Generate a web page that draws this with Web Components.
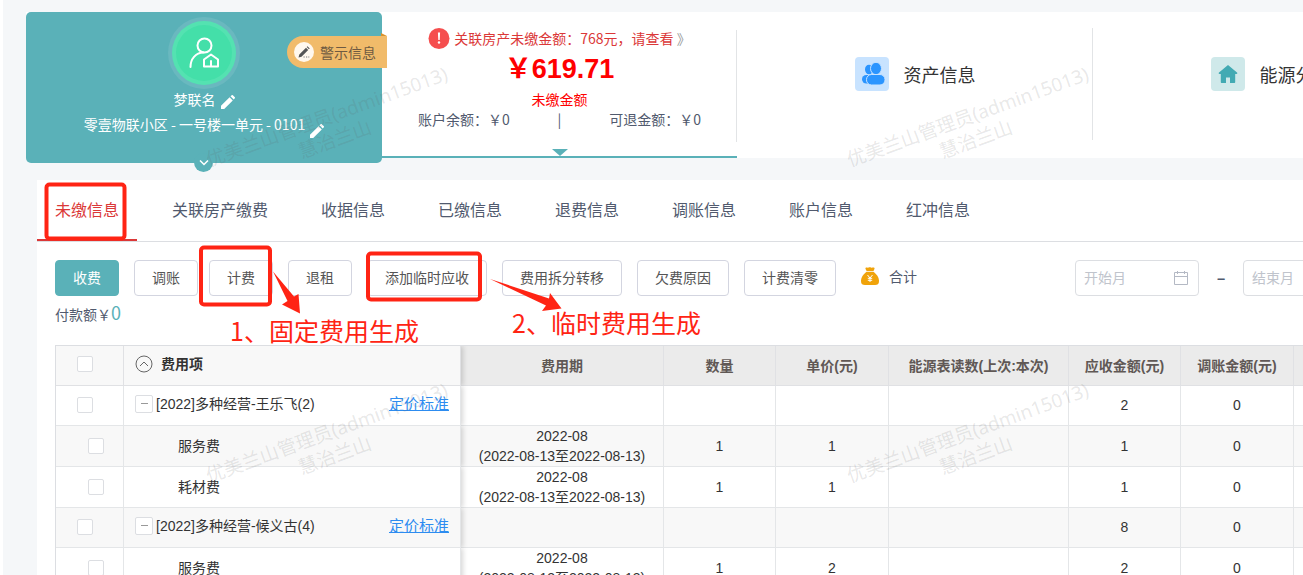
<!DOCTYPE html>
<html lang="zh-CN">
<head>
<meta charset="utf-8">
<title>收费管理</title>
<style>
  :root {
    --teal: #5ab1b8;
    --red: #db3838;
    --mark: #ff2414;
    --text: #515a6e;
    --line: #e4e6e8;
    --page: #f5f7f9;
  }

  body {
    margin: 0;
    min-height: 100vh;
    border-left: 3px solid #fff;
    box-sizing: border-box;
    overflow: hidden;
    position: relative;
    background: var(--page);
    color: var(--text);
    font: 14px/20px "Noto Sans CJK SC", sans-serif;
  }

  header {
    display: grid;
    grid-template-columns: 356px 355px repeat(2, minmax(356px, 1fr));
    margin: 12px 0 22px 23px;
    height: 146px;
    background: #fff;
  }

  main {
    margin-left: 34px;
    background: #fff;
  }

  .toolbar {
    display: flex;
    align-items: center;
    gap: 15px;
    padding: 18px 0 0 18px;
  }

  .pair {
    display: flex;
    gap: 11px;
  }
</style>
</head>
<body>
  <header>
    <owner-card name="梦联名" address="零壹物联小区 - 一号楼一单元 - 0101">警示信息</owner-card>
    <balance-panel></balance-panel>
    <entry-panel icon="people">资产信息</entry-panel>
    <entry-panel icon="house">能源分析</entry-panel>
  </header>
  <main>
    <tab-bar></tab-bar>
    <div class="toolbar">
      <tool-button primary>收费</tool-button>
      <div class="pair">
        <tool-button>调账</tool-button>
        <tool-button>计费</tool-button>
      </div>
      <tool-button>退租</tool-button>
      <tool-button>添加临时应收</tool-button>
      <tool-button>费用拆分转移</tool-button>
      <tool-button>欠费原因</tool-button>
      <tool-button>计费清零</tool-button>
      <total-link>合计</total-link>
      <month-range></month-range>
    </div>
    <pay-amount value="0">付款额￥</pay-amount>
    <fee-table></fee-table>
  </main>
  <water-mark></water-mark>
  <guide-marks></guide-marks>

<script>
const define = (name, render) => {
  customElements.define(name, class extends HTMLElement {
    constructor() {
      super();
      this.attachShadow({ mode: "open" });
    }

    connectedCallback() {
      this.shadowRoot.innerHTML = render(this);
    }
  });
};

const pencil = `
  <svg width="14" height="14" viewBox="0 0 14 14" fill="currentColor" aria-hidden="true">
    <path d="M0 14v-3.2L8.6 2.2l3.2 3.2L3.2 14zM9.5 1.3 10.4.4a1.2 1.2 0 0 1 1.7 0l1.5 1.5a1.2 1.2 0 0 1 0 1.7l-.9.9z"/>
  </svg>`;

define("owner-card", (el) => `
  <style>
    :host {
      display: flex;
      flex-direction: column;
      align-items: center;
      position: relative;
      margin-bottom: -5px;
      padding-top: 5px;
      box-sizing: border-box;
      border-radius: 5px;
      background: var(--teal);
      color: #fff;
    }
    .name, .address {
      display: flex;
      align-items: flex-start;
      gap: 5px;
      height: 25px;
    }
    button {
      border: 0;
      padding: 0;
      background: none;
      color: inherit;
      font: inherit;
      display: flex;
    }
    .name button { padding-top: 6px; }
    .address button { padding-top: 10px; }
    .warn {
      position: absolute;
      top: 24px;
      right: -5px;
      height: 32px;
      align-items: center;
      gap: 6px;
      padding: 0 11px 0 7px;
      border-radius: 16px 0 0 16px;
      background: #f1bb6a;
      color: #6e5a42;
    }
    .warn::after {
      content: "";
      position: absolute;
      right: 0;
      top: -3px;
      border-left: 6px solid #d9922c;
      border-top: 3px solid transparent;
    }
    .more {
      position: absolute;
      left: calc(50% - 10px);
      bottom: -9px;
      width: 19px;
      height: 19px;
      align-items: center;
      justify-content: center;
      border-radius: 50%;
      background: var(--teal);
    }
  </style>
  <svg width="72" height="72" viewBox="0 0 72 72" fill="none" stroke="#fff" stroke-width="2" stroke-linejoin="round" stroke-linecap="round" aria-hidden="true">
    <circle cx="36" cy="36" r="36" fill="#6ab8bf" stroke="none"/>
    <circle cx="36" cy="36" r="32" fill="#54e2b1" stroke="none"/>
    <circle cx="36" cy="36" r="28" fill="#44dfa9" stroke="none"/>
    <circle cx="36.500" cy="28.500" r="7"/>
    <path d="M22.500 50c0-8 5-14.300 13-14.500"/>
    <path d="M36 42.500 43 37.500l7 5V49.500H36z"/>
    <path d="M43 49v-5"/>
  </svg>
  <div class="name">${el.getAttribute("name")}<button aria-label="修改姓名">${pencil}</button></div>
  <div class="address">${el.getAttribute("address")}<button aria-label="修改地址">${pencil}</button></div>
  <button class="warn">
    <svg width="20" height="20" viewBox="0 0 20 20" aria-hidden="true">
      <circle cx="10" cy="10" r="10" fill="#fff8ee"/>
      <path d="M4.500 15.500l.8-3L12 5.800l2.200 2.200-6.700 6.700zM12.700 5.100l.8-.8 2.200 2.200-.8.800z" fill="#555"/>
      <path d="M9.500 15h1.200M12 15h1.200M14.300 15h1" stroke="#777"/>
    </svg>
    <slot></slot>
  </button>
  <button class="more" aria-label="展开">
    <svg width="10" height="6" viewBox="0 0 10 6" fill="none" stroke="#fff" stroke-width="1.500"><path d="M1 .5l4 4 4-4"/></svg>
  </button>
`);

define("balance-panel", () => `
  <style>
    :host {
      display: flex;
      flex-direction: column;
      position: relative;
      padding-top: 15px;
      border-bottom: 2px solid var(--teal);
      text-align: center;
    }
    :host::before {
      content: "";
      position: absolute;
      right: 0;
      top: 18px;
      height: 112px;
      border-right: 1px solid #e2e4e6;
    }
    :host::after {
      content: "";
      position: absolute;
      left: calc(50% - 8px);
      bottom: 0;
      border: 8px solid transparent;
      border-top: 7px solid var(--teal);
      border-bottom: 0;
    }
    a {
      display: flex;
      justify-content: center;
      align-items: center;
      gap: 4px;
      height: 22px;
      color: var(--red);
      text-decoration: none;
    }
    svg { margin-top: 2px; }
    i { color: #999; font-style: normal; }
    strong { font: bold 27px/40px "Liberation Sans", "Noto Sans CJK SC", sans-serif; color: #f00; }
    .due { color: #f00; }
    .split {
      display: flex;
      justify-content: space-between;
      padding: 0 36px;
    }
  </style>
  <a href="#related">
    <svg width="22" height="22" viewBox="0 0 22 22" aria-hidden="true">
      <circle cx="11" cy="10.500" r="10.500" fill="#f54e4e"/>
      <path d="M9.900 4.500h2.200l-.4 7.500h-1.400z" fill="#fff"/>
      <circle cx="11" cy="14.500" r="1.200" fill="#fff"/>
    </svg>
    <span>关联房产未缴金额：768元，请查看 <i>》</i></span>
  </a>
  <strong>￥619.71</strong>
  <span class="due">未缴金额</span>
  <div class="split"><span>账户余额：￥0</span><span>|</span><span>可退金额：￥0</span></div>
`);

const entryIcons = {
  people: `
    <rect width="34" height="34" rx="4" fill="#c8e3ff"/>
    <g fill="#2b95ff">
      <ellipse cx="14" cy="12.500" rx="4" ry="4.800"/>
      <rect x="7" y="18" width="14" height="8.500" rx="4.200"/>
      <g stroke="#c8e3ff">
        <ellipse cx="21" cy="11.500" rx="5.500" ry="6.200"/>
        <rect x="11.500" y="17.500" width="18.500" height="10.500" rx="5"/>
      </g>
    </g>`,
  house: `
    <rect width="34" height="34" rx="4" fill="#cfe9ea"/>
    <path d="M17 8l9 7.500c.7.700.3 1.500-.5 1.500h-1.300v8c0 .700-.4 1-1 1H19v-5.500h-4V26h-4.200c-.6 0-1-.3-1-1v-8H8.500c-.8 0-1.200-.8-.5-1.500z" fill="#42aab3"/>`,
};

define("entry-panel", (el) => `
  <style>
    :host {
      display: flex;
      align-items: center;
      justify-content: center;
      position: relative;
      padding-bottom: 22px;
      box-sizing: border-box;
    }
    :host::after {
      content: "";
      position: absolute;
      right: 0;
      top: 16px;
      height: 112px;
      border-right: 1px solid #e2e4e6;
    }
    a {
      display: flex;
      align-items: center;
      gap: 15px;
      color: #333;
      font-size: 18px;
      text-decoration: none;
      white-space: nowrap;
    }
  </style>
  <a href="#${el.getAttribute("icon")}">
    <svg width="34" height="34" viewBox="0 0 34 34" aria-hidden="true">${entryIcons[el.getAttribute("icon")]}</svg>
    <slot></slot>
  </a>
`);

const tabs = ["未缴信息", "关联房产缴费", "收据信息", "已缴信息", "退费信息", "调账信息", "账户信息", "红冲信息"];

define("tab-bar", () => `
  <style>
    :host {
      display: flex;
      gap: 17px;
      border-bottom: 1px solid #dcdee2;
    }
    button {
      height: 61px;
      padding: 0 18px 1px;
      border: 0;
      border-bottom: 2px solid transparent;
      background: none;
      color: var(--text);
      font: inherit;
      font-size: 16px;
      white-space: nowrap;
    }
    .on { color: var(--red); border-color: var(--red); }
  </style>
  ${tabs.map((t, i) => `<button class="${i ? "" : "on"}">${t}</button>`).join("")}
`);

define("tool-button", () => `
  <style>
    :host { display: block; }
    button {
      height: 36px;
      padding: 0 17px 3px;
      border: 1px solid #d3d5e0;
      border-radius: 4px;
      background: #fff;
      color: #555;
      font: inherit;
      white-space: nowrap;
      display: block;
    }
    :host([primary]) button {
      border-color: var(--teal);
      background: var(--teal);
      color: #fff;
    }
  </style>
  <button><slot></slot></button>
`);

define("total-link", () => `
  <style>
    :host { display: flex; align-items: center; gap: 10px; margin-left: 10px; padding-bottom: 4px; white-space: nowrap; }
  </style>
  <svg width="18" height="18" viewBox="0 0 18 18" aria-hidden="true">
    <path d="M4.500 1c1-1 2 .2 3-.5.8-.5 1.700-.5 2.500 0 1 .7 2-.5 3.300.3.800.500-.2 1.700-.8 3.200h-7C5.500 3 4 2 4.500 1z" fill="#f0a30a"/>
    <path d="M5.500 4.800h7C15.500 7 18 10.500 18 14c0 3-1.500 4-4 4H4c-2.500 0-4-1-4-4 0-3.500 2.500-7 5.500-9.200z" fill="#f0a30a"/>
    <path d="M6.500 8 9 11l2.500-3M9 11v4M6.800 11.300h4.400M6.800 13.300h4.400" fill="none" stroke="#fff"/>
  </svg>
  <slot></slot>
`);

const monthField = (label) => `
  <label>
    <input type="text" placeholder="${label}" aria-label="${label}">
    <svg width="16" height="16" viewBox="0 0 16 16" fill="none" stroke="#b4b9c4" aria-hidden="true">
      <path d="M1.500 2.500h13v12h-13zM1.500 6.500h13M4.500 1v3M11.500 1v3"/>
    </svg>
  </label>`;

define("month-range", () => `
  <style>
    :host { display: flex; align-items: center; margin-left: 143px; gap: 17px; }
    label {
      display: flex;
      align-items: center;
      width: 124px;
      height: 36px;
      padding: 0 9px 0 8px;
      box-sizing: border-box;
      border: 1px solid #dcdee2;
      border-radius: 4px;
    }
    input {
      flex: 1;
      min-width: 0;
      padding: 0 0 2px;
      border: 0;
      outline: 0;
      font: inherit;
      color: inherit;
    }
    input::placeholder { color: #c0c4cc; opacity: 1; }
    span { width: 10px; padding-bottom: 3px; text-align: center; font-weight: bold; font-size: 16px; }
  </style>
  ${monthField("开始月")}<span>–</span>${monthField("结束月")}
`);

define("pay-amount", (el) => `
  <style>
    :host { display: block; padding: 6px 18px 19px; line-height: 24px; }
    b { color: var(--teal); font-size: 18px; font-weight: normal; line-height: 20px; }
  </style>
  <slot></slot><b>${el.getAttribute("value")}</b>
`);

const columns = [
  ["费用期", 203], ["数量", 112], ["单价(元)", 113], ["能源表读数(上次:本次)", 180],
  ["应收金额(元)", 112], ["调账金额(元)", 113], ["", 112],
];

const period = "2022-08<br>(2022-08-13至2022-08-13)";

const rows = [
  { group: true, name: "[2022]多种经营-王乐飞(2)", cells: ["", "", "", "", 2, 0, ""] },
  { name: "服务费", cells: [period, 1, 1, "", 1, 0, ""] },
  { name: "耗材费", cells: [period, 1, 1, "", 1, 0, ""] },
  { group: true, name: "[2022]多种经营-候义古(4)", cells: ["", "", "", "", 8, 0, ""] },
  { name: "服务费", cells: [period, 1, 2, "", 2, 0, ""] },
];

const nameCell = (row) => row.group
  ? `<div class="line"><button class="fold" aria-label="收起"></button><span>${row.name}</span><a href="#price">定价标准</a></div>`
  : row.name;

define("fee-table", () => `
  <style>
    :host { display: block; margin-left: 18px; overflow: hidden; }
    table {
      table-layout: fixed;
      width: 1351px;
      border-spacing: 0;
      border: 1px solid #dcdee2;
      border-width: 1px 0 0 1px;
      color: #333;
      font: 14px/20px "Liberation Sans", "Noto Sans CJK SC", sans-serif;
    }
    th, td {
      padding: 0;
      border-right: 1px solid var(--line);
      border-bottom: 1px solid var(--line);
      text-align: center;
      white-space: nowrap;
      box-sizing: border-box;
    }
    th { height: 40px; background: #ebebeb; color: #605855; border-color: #e0e1e4; }
    .fixed { background: #f8f8f8; color: #333; }
    td { height: 41px; }
    .group td { height: 40px; padding-bottom: 2px; }
    tr:nth-child(even) td { background: #f8f8f8; }
    td.name, th.name { text-align: left; padding-left: 11px; }
    td.child { padding-left: 54px; }
    .edge { box-shadow: 2px 0 5px rgba(0, 0, 0, 0.16); position: relative; clip-path: inset(0 -8px 0 0); }
    .fixed, .group .edge { padding-bottom: 3px; }
    .line { display: flex; align-items: center; gap: 3px; padding-right: 11px; }
    .title { gap: 8px; }
    a { margin-left: auto; color: #2d8cf0; font-size: 15px; }
    input {
      appearance: none;
      display: block;
      width: 16px;
      height: 16px;
      margin: 0 0 0 21px;
      border: 1px solid #dcdee2;
      border-radius: 2px;
      background: #fff;
    }
    tr:not(.group) input { margin-left: 32px; }
    .fold {
      display: flex;
      justify-content: center;
      width: 18px;
      height: 18px;
      padding: 7px 0 0;
      border: 1px solid #dcdee2;
      border-radius: 2px;
      background: #fff;
    }
    .fold::before { content: ""; width: 7px; height: 1px; background: #999; }
  </style>
  <table>
    <colgroup>
      <col style="width: 68px"><col style="width: 337px">
      ${columns.map(([, w]) => `<col style="width: ${w}px">`).join("")}
    </colgroup>
    <thead>
      <tr class="group">
        <th class="fixed"><input type="checkbox" aria-label="全选"></th>
        <th class="fixed name edge">
          <div class="line title">
            <svg width="18" height="18" viewBox="0 0 18 18" fill="none" stroke="#666" aria-hidden="true">
              <circle cx="9" cy="9" r="8"/><path d="M5 11l4-4 4 4"/>
            </svg>费用项
          </div>
        </th>
        ${columns.map(([label]) => `<th>${label}</th>`).join("")}
      </tr>
    </thead>
    <tbody>
      ${rows.map((row) => `
        <tr class="${row.group ? "group" : ""}">
          <td><input type="checkbox" aria-label="${row.name}"></td>
          <td class="name edge ${row.group ? "" : "child"}">${nameCell(row)}</td>
          ${row.cells.map((c) => `<td>${c}</td>`).join("")}
        </tr>`).join("")}
    </tbody>
  </table>
`);

define("water-mark", () => `
  <style>
    :host {
      position: absolute;
      inset: -30px 0 0 7px;
      display: grid;
      grid-template-columns: repeat(2, 641px);
      grid-auto-rows: 316px;
      place-items: center;
      overflow: hidden;
      pointer-events: none;
      color: rgba(90, 90, 90, 0.15);
      font: 19px/24px "Noto Sans", "Noto Sans CJK SC", sans-serif;
      text-align: center;
    }
    div { transform: rotate(-20deg); white-space: nowrap; }
  </style>
  ${"<div>优美兰山管理员(admin15013)<br>慧治兰山</div>".repeat(4)}
`);

// red boxes, arrows and step captions laid over the page
define("guide-marks", () => `
  <style>
    :host { position: absolute; inset: 0; pointer-events: none; overflow: hidden; }
    svg { position: absolute; left: 0; top: 0; }
    p {
      position: absolute;
      margin: 0;
      color: var(--mark);
      font-size: 25px;
      line-height: 32px;
      white-space: nowrap;
    }
    .first { left: 227px; top: 314px; }
    .second { left: 509px; top: 306px; }
  </style>
  <svg width="700" height="360" viewBox="3 0 700 360" aria-hidden="true">
    <g fill="none" stroke="#ff2414" stroke-width="4">
      <rect x="46.500" y="184.500" width="78" height="54" rx="3"/>
      <rect x="201" y="247.500" width="69" height="57" rx="3"/>
      <rect x="368" y="253.500" width="112" height="46" rx="3"/>
    </g>
    <path d="M273 271.500 294 296.500 298.500 294 300 313.500 282 304.500 287.500 301z" fill="#ff2414"/>
    <path d="M490 279 549 298.500 550 293 561.500 308.500 542 311 546 305.500z" fill="#ff2414"/>
  </svg>
  <p class="first">1、固定费用生成</p>
  <p class="second">2、临时费用生成</p>
`);
</script>
</body>
</html>
